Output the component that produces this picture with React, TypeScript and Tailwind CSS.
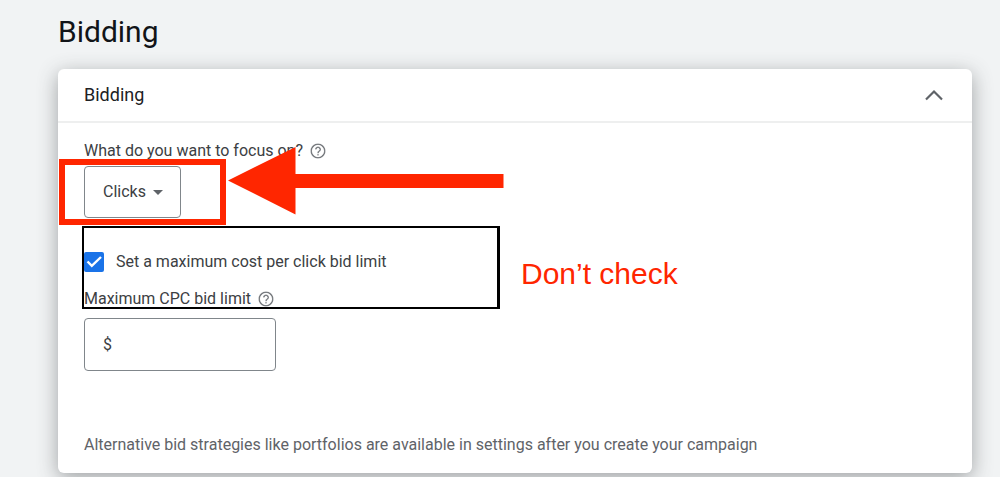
import { useState } from "react";

function HelpIcon() {
  return (
    <svg
      viewBox="0 0 24 24"
      className="size-[18px] shrink-0 fill-[#5f6368] stroke-white"
      strokeWidth="0.5"
      aria-hidden="true"
    >
      <path d="M11 18h2v-2h-2v2zm1-16C6.48 2 2 6.48 2 12s4.48 10 10 10 10-4.48 10-10S17.52 2 12 2zm0 18c-4.41 0-8-3.59-8-8s3.59-8 8-8 8 3.59 8 8-3.59 8-8 8zm0-14c-2.21 0-4 1.79-4 4h2c0-1.1.9-2 2-2s2 .9 2 2c0 2-3 1.75-3 5h2c0-2.25 3-2.5 3-5 0-2.21-1.79-4-4-4z" />
    </svg>
  );
}

function Annotations() {
  return (
    <div className="pointer-events-none absolute inset-0">
      <div className="absolute left-[59px] top-[159px] h-[66px] w-[167px] border-6 border-[#ff2600]" />
      <div className="absolute left-[82px] top-[226px] h-[83px] w-[418px] border-2 border-r-3 border-black" />
      <svg
        viewBox="0 0 276 68"
        className="absolute left-[228px] top-[147px] h-[68px] w-[276px] fill-[#ff2600]"
        aria-hidden="true"
      >
        <path d="M0 33.5 67.5 0v27H275.5v14H67.5v26.5z" />
      </svg>
      <p className="absolute left-[521px] top-[256px] text-[30px] leading-9 text-[#ff2600] font-['Liberation_Sans',Arial,sans-serif]">
        Don’t check
      </p>
    </div>
  );
}

export default function App() {
  const [open, setOpen] = useState(true);
  const [limit, setLimit] = useState(true);

  return (
    <main className="relative min-h-screen bg-[#f1f3f4] px-7 pb-1 text-base text-[#3c4043] font-[Roboto,sans-serif]">
      <div className="pl-[30px]">
        <h1 className="pb-[17px] pt-3 text-[30px] leading-10 text-[#111418]">Bidding</h1>
        <section className="rounded-md bg-white shadow-[0_5px_20px_rgba(60,64,67,0.45)]">
          <header className="flex h-[54px] items-center justify-between border-b-2 border-[#eeefef] px-[26px]">
            <h2 className="text-lg text-[#202124]">Bidding</h2>
            <button
              type="button"
              aria-label="Toggle bidding"
              aria-expanded={open}
              onClick={() => setOpen(!open)}
              className="flex size-6 items-center justify-center"
            >
              <svg viewBox="0 0 18 12" className="h-3 w-[18px]" fill="none" stroke="#5f6368" strokeWidth="2.2">
                <path d="M1 10.5 9 2.5l8 8" />
              </svg>
            </button>
          </header>
          {open && (
            <div className="px-[26px] pb-4 pt-4">
              <div className="flex h-6 items-center gap-1.5">
                <label htmlFor="focus">What do you want to focus on?</label>
                <HelpIcon />
              </div>
              <div className="relative mt-[3px] w-[97px]">
                <select
                  id="focus"
                  className="h-[52px] w-full appearance-none rounded-sm border border-[#80868b] bg-white pl-[18px] text-[#3c4043]"
                >
                  <option>Clicks</option>
                  <option>Conversions</option>
                </select>
                <svg
                  viewBox="0 0 10 5"
                  className="pointer-events-none absolute right-[18px] top-6 h-[5px] w-2.5 fill-[#5f6368]"
                  aria-hidden="true"
                >
                  <path d="M0 0h10L5 5z" />
                </svg>
              </div>
              <div className="mt-8 flex h-6 items-center gap-3">
                <span className="relative size-5">
                  <input
                    id="limit"
                    type="checkbox"
                    checked={limit}
                    onChange={(e) => setLimit(e.target.checked)}
                    className="block size-5 appearance-none rounded-xs border-2 border-[#5f6368] checked:border-[#1a73e8] checked:bg-[#1a73e8]"
                  />
                  {limit && (
                    <svg
                      viewBox="0 0 20 20"
                      className="pointer-events-none absolute inset-0"
                      fill="none"
                      stroke="white"
                      strokeWidth="2.4"
                    >
                      <path d="m3.5 9.5 4.3 4.3L17 5" />
                    </svg>
                  )}
                </span>
                <label htmlFor="limit">Set a maximum cost per click bid limit</label>
              </div>
              <div className="mt-[13px] flex h-6 items-center gap-1.5">
                <label htmlFor="cpc">Maximum CPC bid limit</label>
                <HelpIcon />
              </div>
              <div className="mt-[7px] flex h-[53px] w-48 items-center gap-2 rounded-sm border border-[#80868b] px-[18px]">
                <span>$</span>
                <input id="cpc" type="text" className="w-full min-w-0 outline-none" />
              </div>
              <p className="mt-[62px] leading-6 text-[#5f6368]">
                Alternative bid strategies like portfolios are available in settings after you create your campaign
              </p>
            </div>
          )}
        </section>
      </div>
      <Annotations />
    </main>
  );
}
